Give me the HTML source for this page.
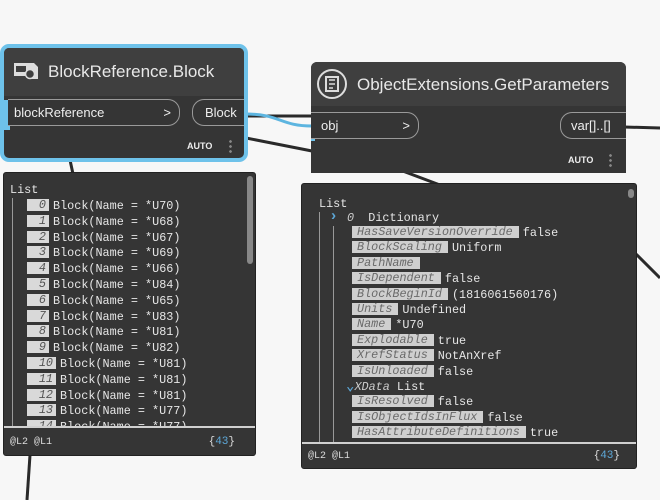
<!DOCTYPE html>
<html><head><meta charset="utf-8"><style>
*{margin:0;padding:0;box-sizing:border-box}
body{width:660px;height:500px;background:#f7f7f7;position:relative;overflow:hidden;font-family:"Liberation Sans",sans-serif}
.abs{position:absolute}
.node{position:absolute;background:#353535;border-radius:7px;overflow:hidden}
.hdr{position:absolute;left:0;right:0;top:0;background:#3f3f3f;color:#e8e8e8;font-size:17px}
.port{position:absolute;border:1px solid #9a9a9a;border-radius:12px;color:#eee;font-size:13px;height:27px;line-height:25px;background:#353535}
.auto{position:absolute;color:#eee;font-size:9px;font-weight:bold}
.dots{position:absolute;width:3px;height:14px;background:radial-gradient(circle,#888 1.2px,transparent 1.5px) 0 0/3px 5px repeat-y}
.pv{position:absolute;background:#353535;border:1px solid #222;font-family:"Liberation Mono",monospace;color:#e6e6e6;font-size:11.8px;overflow:hidden}
.row{position:absolute;white-space:pre;line-height:14px}
.ix{display:inline-block;background:#d9d9d9;color:#555;font-style:italic;text-align:right;padding-right:3px;height:12px;line-height:12px;vertical-align:1px;margin-right:4px}
.lb{display:inline-block;background:#cfcfcf;color:#6a6a6a;font-style:italic;padding:0 6px 0 5px;height:12px;line-height:12px;vertical-align:1px;margin-right:4px}
.foot{position:absolute;left:0;right:0;bottom:0;border-top:2px solid #d0d0d0;background:#353535;font-size:10px;color:#ddd}
</style></head><body>
<svg class="abs" style="left:0;top:0" width="660" height="500">
<g stroke="#2a2a2a" stroke-width="3" fill="none">
<path d="M246 116 L312 116"/>
<path d="M246 138 L312 151"/>
<path d="M70 160 L73 174"/>
<path d="M400 170 L440 185"/>
<path d="M624 127 L660 128"/>
<path d="M636 254 L660 278"/>
<path d="M30 455 L27 500"/>
</g>
<path d="M246 114 C280 114,280 126,312 126" stroke="#5db5e0" stroke-width="3" fill="none"/>
</svg>

<!-- Node 1 -->
<div class="node" style="left:0;top:44px;width:248px;height:118px;border:4px solid #6ec2ea;border-radius:9px">
 <div class="hdr" style="height:48px">
  <svg class="abs" style="left:9px;top:13px" width="26" height="20"><rect x="1" y="2" width="17" height="13" fill="#ddd"/><rect x="3" y="5" width="10" height="6" fill="#3f3f3f"/><path d="M16 2h5l4 4v12H15z" fill="#ddd"/><circle cx="17" cy="13" r="4.5" fill="#3f3f3f" stroke="#ddd" stroke-width="1.5"/></svg>
  <div class="abs" style="left:44px;top:14px">BlockReference.Block</div>
 </div>
 <div class="abs" style="left:0;top:52px;width:6px;height:30px;background:#6ec2ea"></div>
 <div class="port" style="left:4px;top:51px;width:172px;padding-left:6px;border-left:none;border-radius:0 12px 12px 0">blockReference<span class="abs" style="right:8px">&gt;</span></div>
 <div class="port" style="left:188px;top:51px;width:60px;padding-left:12px;border-right:none;border-radius:12px 0 0 12px">Block</div>
 <div class="auto" style="left:183px;top:93px">AUTO</div>
 <div class="dots" style="left:225px;top:91px"></div>
</div>

<!-- Node 2 -->
<div class="node" style="left:311px;top:62px;width:315px;height:111px;border-radius:6px 6px 0 0">
 <div class="hdr" style="height:44px">
  <svg class="abs" style="left:5px;top:6px" width="32" height="32"><circle cx="16" cy="16" r="14" fill="none" stroke="#ddd" stroke-width="2"/><rect x="10" y="9" width="12" height="14" fill="none" stroke="#ddd" stroke-width="2"/><path d="M13 12h6M13 16h6M13 20h4" stroke="#ddd" stroke-width="1.5"/></svg>
  <div class="abs" style="left:46px;top:13px">ObjectExtensions.GetParameters</div>
 </div>
 <div class="abs" style="left:0;top:50px;width:4px;height:29px;background:#6ec2ea"></div>
 <div class="port" style="left:0;top:50px;width:108px;padding-left:10px;border-left:none;border-radius:0 12px 12px 0">obj<span class="abs" style="right:8px">&gt;</span></div>
 <div class="port" style="left:249px;top:50px;width:66px;padding-left:10px;border-right:none;border-radius:12px 0 0 12px">var[]..[]</div>
 <div class="auto" style="left:257px;top:93px">AUTO</div>
 <div class="dots" style="left:298px;top:91px"></div>
</div>

<!-- Left preview -->
<div class="pv" style="left:3px;top:172px;width:253px;height:284px;border-radius:3px">
 <div class="abs" style="left:243px;top:3px;width:6px;height:88px;background:#888;border-radius:3px"></div>
 <div class="row" style="left:6px;top:10px">List</div>
 <div class="abs" style="left:8px;top:25px;width:1px;height:230px;background:#999"></div>
 <div id="L"></div>
 <div class="foot" style="height:29px"><span class="abs" style="left:6px;top:9px">@L2 @L1</span><span class="abs" style="right:20px;top:8px;font-size:11px">{<span style="color:#5da8d8">43</span>}</span></div>
</div>

<!-- Right preview -->
<div class="pv" style="left:301px;top:183px;width:336px;height:286px;border-radius:3px">
 <div class="abs" style="left:326px;top:5px;width:6px;height:9px;background:#888;border-radius:3px"></div>
 <div class="row" style="left:17px;top:13px">List</div>
 <div class="abs" style="left:17px;top:28px;width:1px;height:230px;background:#999"></div>
 <div class="abs" style="left:31px;top:42px;width:1px;height:216px;background:#999"></div>
 <div class="row" style="left:27px;top:26px;color:#5da8d8;font-weight:bold;font-size:15px">›</div>
 <div class="row" style="left:45px;top:27px"><i style="color:#ccc">0</i>  Dictionary</div>
 <div id="R"></div>
 <div class="foot" style="height:26px"><span class="abs" style="left:6px;top:7px">@L2 @L1</span><span class="abs" style="right:16px;top:6px;font-size:11px">{<span style="color:#5da8d8">43</span>}</span></div>
</div>

<script>
var names=["U70","U68","U67","U69","U66","U84","U65","U83","U81","U82","U81","U81","U81","U77","U77"];
var h="";
for(var i=0;i<15;i++){
 var w=i<10?22:29;
 h+='<div class="row" style="left:23px;top:'+(26+i*15.8)+'px"><span class="ix" style="width:'+w+'px">'+i+'</span>Block(Name = *'+names[i]+')</div>';
}
document.getElementById("L").innerHTML=h;
var r=[["HasSaveVersionOverride","false"],["BlockScaling","Uniform"],["PathName",""],["IsDependent","false"],["BlockBeginId","(1816061560176)"],["Units","Undefined"],["Name","*U70"],["Explodable","true"],["XrefStatus","NotAnXref"],["IsUnloaded","false"],null,["IsResolved","false"],["IsObjectIdsInFlux","false"],["HasAttributeDefinitions","true"]];
var s="";
for(var j=0;j<r.length;j++){
 var t=42+j*15.4;
 if(!r[j]){s+='<div class="row" style="left:44px;top:'+t+'px"><span style="color:#5da8d8;font-weight:bold;font-size:14px">⌄</span><i style="color:#ccc">XData</i> List</div>';continue;}
 s+='<div class="row" style="left:50px;top:'+t+'px"><span class="lb">'+r[j][0]+'</span>'+r[j][1]+'</div>';
}
document.getElementById("R").innerHTML=s;
</script>
</body></html>
